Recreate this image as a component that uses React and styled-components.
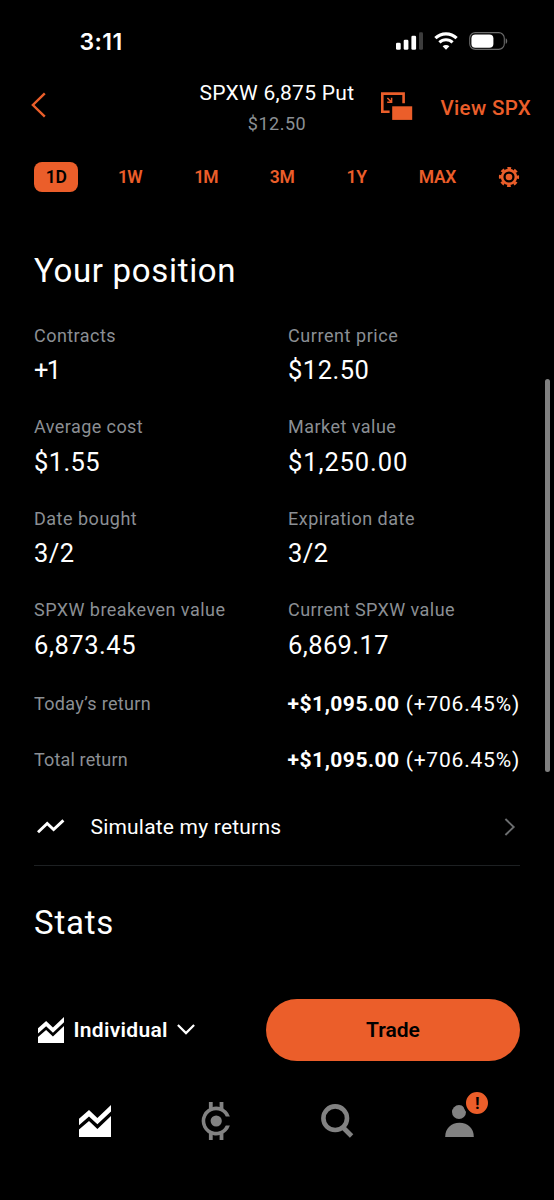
import React from 'react';
import styled, { createGlobalStyle } from 'styled-components';

const orange = '#eb5e2a';
const grey = '#8b8f94';

const ranges = [
  { label: '1D', spacing: -0.3, active: true },
  { label: '1W', spacing: -0.7 },
  { label: '1M', spacing: -1 },
  { label: '3M', spacing: -0.4 },
  { label: '1Y', spacing: -0.4 },
  { label: 'MAX', spacing: -0.3 },
];

const position = [
  { label: 'Contracts', labelSpacing: 0.45, value: '+1', valueSpacing: -1.8 },
  { label: 'Current price', labelSpacing: 0.56, value: '$12.50', valueSpacing: 0.5 },
  { label: 'Average cost', labelSpacing: 0.43, value: '$1.55', valueSpacing: 0.4 },
  { label: 'Market value', labelSpacing: 0.47, value: '$1,250.00', valueSpacing: 0.9 },
  { label: 'Date bought', labelSpacing: 0.5, value: '3/2', valueSpacing: 0.4 },
  { label: 'Expiration date', labelSpacing: 0.5, value: '3/2', valueSpacing: 0.4 },
  { label: 'SPXW breakeven value', labelSpacing: 0.47, value: '6,873.45', valueSpacing: 0.55 },
  { label: 'Current SPXW value', labelSpacing: 0.43, value: '6,869.17', valueSpacing: 0.4 },
];

const returns = [
  { label: 'Today’s return', spacing: 0.34, amount: '+$1,095.00', percent: '(+706.45%)' },
  { label: 'Total return', spacing: 0.15, amount: '+$1,095.00', percent: '(+706.45%)' },
];

const ChartIcon = ({ size }) => (
  <svg width={size} height={size} viewBox="0 0 32 32" fill="currentColor">
    <path d="M0 13.7 10 5l8.4 8L32 0v6.6L18.4 19.3 10 11.4 0 20.3z" />
    <path d="M0 24.6 10 16l8.4 8L32 11v21H0z" />
  </svg>
);

const App = () => (
  <Screen>
    <GlobalStyle />
    <StatusBar>
      <Clock>3:11</Clock>
      <StatusIcons>
        <svg width="27" height="18" viewBox="0 0 27 18" fill="#fff">
          <rect x="0" y="10.7" width="4.7" height="7" rx="1.3" />
          <rect x="7.7" y="7.7" width="4.7" height="10" rx="1.3" />
          <rect x="15.4" y="3.7" width="4.7" height="14" rx="1.3" />
          <rect x="23" y="0.3" width="4" height="17.4" rx="1.3" fill="#3c3c3c" />
        </svg>
        <svg width="24" height="18" viewBox="0 0 24 18" fill="none" stroke="#fff">
          <path d="M1.4 6.1a15.2 15.2 0 0 1 21.2 0" strokeWidth="3.2" />
          <path d="M5.4 10.4a9.4 9.4 0 0 1 13.2 0" strokeWidth="3" />
          <path d="M12 17.8 8.6 14.3a4.9 4.9 0 0 1 6.8 0z" fill="#fff" stroke="none" />
        </svg>
        <svg width="39" height="18" viewBox="0 0 39 18">
          <rect x="0.7" y="0.6" width="34.6" height="16.8" rx="5.6" fill="none" stroke="#6b6b6b" strokeWidth="1.1" />
          <rect x="2.4" y="2.4" width="22" height="13.3" rx="4" fill="#fff" />
          <path d="M36.7 6.2c2 .8 2 4.8 0 5.6z" fill="#6b6b6b" />
        </svg>
      </StatusIcons>
    </StatusBar>

    <Header>
      <Back aria-label="Back">
        <svg width="15" height="26" viewBox="0 0 15 26" fill="none" stroke="currentColor" strokeWidth="2.4">
          <path d="M13.8 1.3 1.9 13l11.9 11.7" />
        </svg>
      </Back>
      <Heading>
        <Name>SPXW 6,875 Put</Name>
        <Price>$12.50</Price>
      </Heading>
      <HeaderActions>
        <PipIcon width="32" height="28" viewBox="0 0 32 28" fill="none" stroke="currentColor">
          <path d="M8.6 19.7H1.3V1.6h21.3v9.6" strokeWidth="2.6" />
          <path d="m6.4 6 4 4M10.6 5.8v4.4H6.2" strokeWidth="1.5" />
          <path d="M11.2 14.3h20v13.6h-20z" fill="currentColor" stroke="none" />
        </PipIcon>
        <ViewLink>View SPX</ViewLink>
      </HeaderActions>
    </Header>

    <Ranges>
      {ranges.map(range => (
        <Range key={range.label} $active={range.active} $spacing={range.spacing}>
          {range.label}
        </Range>
      ))}
      <Gear aria-label="Settings">
        <svg width="22" height="22" viewBox="-11 -11 22 22" fill="none" stroke="currentColor">
          <circle r="6.9" strokeWidth="2.6" />
          <circle r="8.9" strokeWidth="2.4" strokeDasharray="3.7 3.29" strokeDashoffset="1.85" />
          <circle r="3.3" fill="currentColor" stroke="none" />
        </svg>
      </Gear>
    </Ranges>

    <Content>
      <SectionTitle>Your position</SectionTitle>
      <Grid>
        {position.map(item => (
          <div key={item.label}>
            <Label $spacing={item.labelSpacing}>{item.label}</Label>
            <Value $spacing={item.valueSpacing}>{item.value}</Value>
          </div>
        ))}
      </Grid>
      <Returns>
        {returns.map(item => (
          <ReturnRow key={item.label}>
            <Label $spacing={item.spacing}>{item.label}</Label>
            <ReturnValue>
              <strong>{item.amount}</strong> <span>{item.percent}</span>
            </ReturnValue>
          </ReturnRow>
        ))}
      </Returns>
      <Simulate>
        <svg width="28" height="15" viewBox="0 0 28 15" fill="none" stroke="currentColor" strokeWidth="2.9">
          <path d="m1 13.2 9.2-8.8 6.4 6.2L26.4 1.4" />
        </svg>
        <SimulateText>Simulate my returns</SimulateText>
        <ArrowRight width="12" height="18" viewBox="0 0 12 18" fill="none" stroke="currentColor" strokeWidth="1.9">
          <path d="m1.4 1 8.3 8-8.3 8" />
        </ArrowRight>
      </Simulate>
      <StatsTitle>Stats</StatsTitle>
    </Content>

    <TradeBar>
      <Account>
        <ChartIcon size={26} />
        <AccountName>Individual</AccountName>
        <svg width="18" height="11" viewBox="0 0 18 11" fill="none" stroke="currentColor" strokeWidth="2.2">
          <path d="m0.9 1 8.1 8.1L17.1 1" />
        </svg>
      </Account>
      <TradeButton>Trade</TradeButton>
    </TradeBar>

    <Nav>
      <NavItem $active>
        <ChartIcon size={32} />
      </NavItem>
      <NavItem>
        <svg width="30" height="38" viewBox="0 0 30 38" fill="none" stroke="currentColor">
          <path
            d="M28.9 14.4A14.5 14.5 0 1 0 28.9 23.6H24.8A10.8 10.8 0 1 1 24.8 14.4z"
            fill="currentColor"
            stroke="none"
          />
          <path d="M9.8 0v7M20.5 0v7M9.8 38v-7M20.5 38v-7" strokeWidth="3.8" />
          <circle cx="15.2" cy="19" r="5.6" fill="currentColor" stroke="none" />
        </svg>
      </NavItem>
      <NavItem>
        <svg width="33" height="34" viewBox="0 0 33 34" fill="none" stroke="currentColor">
          <circle cx="14.2" cy="14.2" r="11.8" strokeWidth="4.6" />
          <path d="m22.3 23.8 8.3 8.2" strokeWidth="4.8" />
        </svg>
      </NavItem>
      <NavItem>
        <Profile>
          <svg width="29" height="32" viewBox="0 0 29 32" fill="currentColor">
            <circle cx="14" cy="7.1" r="7" />
            <path d="M0.2 32C0.2 23.4 6 17.8 14.5 17.8S28.8 23.4 28.8 32z" />
          </svg>
          <Badge>!</Badge>
        </Profile>
      </NavItem>
    </Nav>
    <Scrollbar />
  </Screen>
);

const GlobalStyle = createGlobalStyle`
  body {
    margin: 0;
    background: #000;
  }

  * {
    box-sizing: border-box;
  }

  svg {
    display: block;
    flex-shrink: 0;
  }

  button {
    border: none;
    padding: 0;
    background: none;
    color: inherit;
    font-family: inherit;
    cursor: pointer;
  }
`;

const Screen = styled.div`
  position: relative;
  width: 554px;
  height: 1200px;
  overflow: hidden;
  display: flex;
  flex-direction: column;

  background: #000;
  color: #fff;
  font-family: Roboto, 'Liberation Sans', sans-serif;
`;

const StatusBar = styled.div`
  height: 72px;
  padding: 28px 46px 0 79.5px;
  display: flex;
  justify-content: space-between;
`;

const Clock = styled.div`
  font-family: Inter, sans-serif;
  font-size: 23px;
  font-weight: 600;
  line-height: 29px;
  letter-spacing: 0.4px;
`;

const StatusIcons = styled.div`
  display: flex;
  gap: 11px;
  padding-top: 4px;
`;

const Header = styled.header`
  height: 72px;
  padding: 0 23px;
  display: grid;
  grid-template-columns: 1fr auto 1fr;
  align-items: center;
`;

const Back = styled.button`
  justify-self: start;
  margin: 0 0 7px 8px;
  color: ${orange};
`;

const Heading = styled.div`
  display: flex;
  flex-direction: column;
  align-items: center;
`;

const Name = styled.h1`
  margin: 0;
  padding-top: 1px;
  font-size: 21px;
  font-weight: 400;
  line-height: 31px;
  letter-spacing: 0.3px;
`;

const Price = styled.div`
  color: ${grey};
  font-size: 18px;
  line-height: 30px;
  letter-spacing: 0.5px;
`;

const HeaderActions = styled.div`
  display: flex;
  justify-content: flex-end;
  align-items: center;
  gap: 27px;
  color: ${orange};
`;

const PipIcon = styled.svg`
  margin-bottom: 4px;
`;

const ViewLink = styled.div`
  font-size: 20.5px;
  font-weight: 500;
  letter-spacing: 0.35px;
  white-space: nowrap;
`;

const Ranges = styled.div`
  height: 30px;
  margin-top: 18px;
  padding: 0 34px;
  display: flex;
  justify-content: space-between;
  align-items: center;
`;

const Range = styled.button`
  height: 30px;
  padding: ${props => (props.$active ? '0 11.7px' : '0 12.4px 0 10.4px')};
  border-radius: 8px;
  font-size: 17.5px;
  font-weight: 600;
  letter-spacing: ${props => props.$spacing}px;

  && {
    background: ${props => (props.$active ? orange : 'none')};
    color: ${props => (props.$active ? '#000' : orange)};
  }
`;

const Gear = styled.button`
  && {
    color: ${orange};
  }
`;

const Content = styled.main`
  flex: 1;
  padding: 58px 34px 0;
`;

const SectionTitle = styled.h2`
  margin: 0;
  font-size: 33px;
  font-weight: 400;
  line-height: 41px;
  letter-spacing: 0.68px;
`;

const Grid = styled.div`
  margin-top: 32.5px;
  display: grid;
  grid-template-columns: 254px 1fr;
  grid-auto-rows: 63.5px;
  row-gap: 28px;
`;

const Label = styled.div`
  color: ${grey};
  font-size: 18px;
  line-height: 24px;
  letter-spacing: ${props => props.$spacing}px;
  white-space: nowrap;
`;

const Value = styled.div`
  margin-top: 5.5px;
  font-size: 25.5px;
  line-height: 34px;
  letter-spacing: ${props => props.$spacing}px;
`;

const Returns = styled.div`
  margin-top: 14.5px;
`;

const ReturnRow = styled.div`
  height: 56px;
  display: flex;
  justify-content: space-between;
  align-items: center;
`;

const ReturnValue = styled.div`
  font-size: 21px;
  letter-spacing: 0.8px;

  strong {
    font-weight: 700;
    letter-spacing: 0.5px;
  }
`;

const Simulate = styled.div`
  height: 78px;
  padding: 0 4px 0 3px;
  display: flex;
  align-items: center;
  border-bottom: 1px solid #1d2022;
`;

const SimulateText = styled.div`
  flex: 1;
  margin-left: 25.5px;
  font-size: 21px;
  letter-spacing: 0.2px;
`;

const ArrowRight = styled.svg`
  color: #6c6e70;
`;

const StatsTitle = styled(SectionTitle)`
  margin-top: 36px;
  letter-spacing: 0.8px;
`;

const TradeBar = styled.div`
  height: 61.5px;
  padding: 0 34px 0 37.5px;
  display: flex;
  justify-content: space-between;
  align-items: center;
`;

const Account = styled.button`
  display: flex;
  align-items: center;
  gap: 9px;
`;

const AccountName = styled.span`
  padding-left: 1px;
  font-size: 21px;
  font-weight: 600;
  letter-spacing: 0.3px;
`;

const TradeButton = styled.button`
  width: 254px;
  height: 61.5px;
  border-radius: 31px;
  font-size: 21px;
  font-weight: 600;

  && {
    background: ${orange};
    color: #000;
  }
`;

const Nav = styled.nav`
  height: 139.5px;
  padding: 41px 34px 0;
  display: grid;
  grid-template-columns: repeat(4, 1fr);
`;

const NavItem = styled.div`
  height: 38px;
  display: flex;
  justify-content: center;
  align-items: center;
  color: ${props => (props.$active ? '#fff' : '#828282')};
`;

const Profile = styled.div`
  position: relative;
`;

const Badge = styled.span`
  position: absolute;
  top: -16px;
  right: -17.5px;
  width: 28px;
  height: 28px;
  border: 3px solid #000;
  border-radius: 50%;

  background: ${orange};
  color: #000;
  font-size: 17px;
  font-weight: 700;
  line-height: 22px;
  text-align: center;
`;

const Scrollbar = styled.div`
  position: absolute;
  top: 379px;
  right: 4px;
  width: 5px;
  height: 393px;
  border-radius: 3px;
  background: #808080;
`;

export default App;
